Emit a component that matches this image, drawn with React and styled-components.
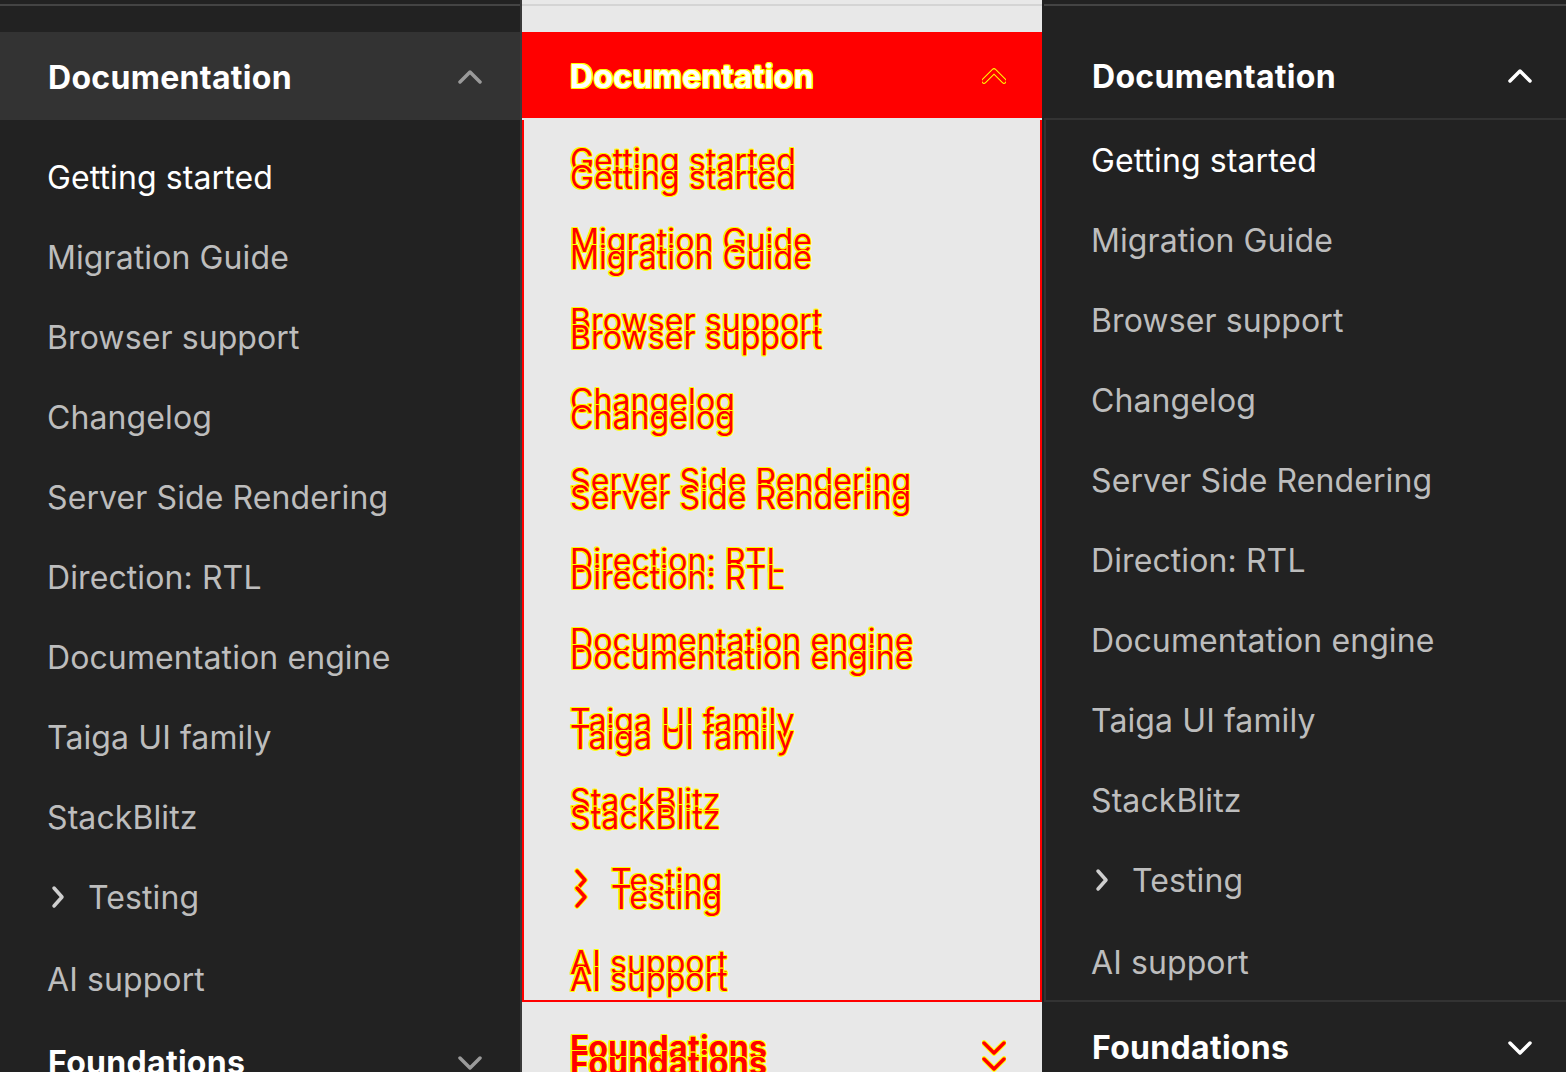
import React from 'react'
import styled, { createGlobalStyle, css } from 'styled-components'

const GlobalStyle = createGlobalStyle`
  html, body { margin: 0; padding: 0; background: #222222; }
  body { font-family: Inter, "Noto Sans", Arial, sans-serif; }
`

const pages = [
  'Getting started',
  'Migration Guide',
  'Browser support',
  'Changelog',
  'Server Side Rendering',
  'Direction: RTL',
  'Documentation engine',
  'Taiga UI family',
  'StackBlitz',
]

const outline = (c) => css`
  text-shadow: 1px 0 ${c}, -1px 0 ${c}, 0 1px ${c}, 0 -1px ${c},
    1px 1px ${c}, -1px -1px ${c}, 1px -1px ${c}, -1px 1px ${c};
`

const Page = styled.div`
  display: flex;
  height: 100vh;
  overflow: hidden;
`

const Column = styled.section`
  width: 522px;
  flex: none;
  box-sizing: border-box;
  display: flex;
  flex-direction: column;
  background: ${(p) => p.$bg};
  border-right: ${(p) => (p.$edge ? `2px solid ${p.$edge}` : 'none')};
`

const TopStrip = styled.div`
  flex: none;
  box-sizing: border-box;
  border-top: 2px solid ${(p) => p.$line};
  margin-top: 4px;
  height: 28px;
`

const Header = styled.div`
  flex: none;
  height: ${(p) => (p.$divider ? 86 : 88)}px;
  background: ${(p) => p.$bg || 'transparent'};
  border-bottom: ${(p) => (p.$divider ? `2px solid ${p.$divider}` : 'none')};
  display: grid;
`

const HeaderRow = styled.div`
  grid-area: 1 / 1;
  height: ${(p) => p.$h || 86}px;
  margin-top: ${(p) => p.$shift || 0}px;
  padding: 2px ${(p) => p.$pr || 38}px 0 48px;
  box-sizing: border-box;
  display: flex;
  align-items: center;
  justify-content: space-between;
  font-size: 32px;
  font-weight: 700;
  letter-spacing: 0.3px;
  white-space: nowrap;
  color: ${(p) => (p.$tone === 'diff' ? '#ff0000' : '#ffffff')};
  ${(p) => p.$tone && outline('#ffff00')}
`

const List = styled.div`
  flex: none;
  padding-top: ${(p) => p.$offset || 0}px;
  padding-bottom: ${(p) => (p.$framed ? 2 : 0)}px;
  box-shadow: ${(p) => (p.$framed ? `inset 2px 0 ${p.$framed}, inset 0 -2px ${p.$framed}` : 'none')};
`

const DiffBox = styled.div`
  flex: none;
  display: grid;
  border: 2px solid #ff0000;
  border-top: none;
`

const Layer = styled.div`
  grid-area: 1 / 1;
  padding-top: ${(p) => p.$offset}px;
  margin-bottom: ${(p) => -p.$offset}px;
`

const Row = styled.div`
  height: ${(p) => p.$h || 80}px;
  margin-top: ${(p) => p.$mt || 0}px;
  padding: 0 ${(p) => (p.$inset ? 46 : 47)}px;
  display: flex;
  align-items: center;
  gap: 22px;
  font-size: 32px;
  letter-spacing: 0.1px;
  white-space: nowrap;
  color: ${(p) => (p.$diff ? '#ff0000' : p.$active ? '#ffffff' : '#bdbdbd')};
  ${(p) => p.$diff && outline('#ffff00')}
`

const IconSlot = styled.span`
  display: flex;
  margin-left: 3px;
`

const Chevron = ({ dir, color, outlineColor }) => {
  const pts = {
    up: '2,17 12,7 22,17',
    down: '2,8 12,18 22,8',
    right: '4,3 12,12 4,21',
  }[dir]
  const narrow = dir === 'right'
  return (
    <svg width={narrow ? 16 : 24} height="24" viewBox={narrow ? '0 0 16 24' : '0 0 24 24'} fill="none">
      {outlineColor && (
        <polyline points={pts} stroke={outlineColor} strokeWidth="5.5" strokeLinecap="round" strokeLinejoin="round" />
      )}
      <polyline points={pts} stroke={color} strokeWidth="3.5" strokeLinecap="round" strokeLinejoin="round" />
    </svg>
  )
}

const NavRows = ({ diff, inset }) => (
  <>
    {pages.map((label, i) => (
      <Row key={label} $diff={diff} $inset={inset} $active={i === 0}>
        {label}
      </Row>
    ))}
    <Row $diff={diff} $inset={inset}>
      <IconSlot>
        <Chevron dir="right" color={diff ? '#ff0000' : '#cfcfcf'} outlineColor={diff ? '#ffff00' : null} />
      </IconSlot>
      Testing
    </Row>
    <Row $diff={diff} $inset={inset} $mt={4} $h={76}>
      AI support
    </Row>
  </>
)

const App = () => (
  <>
    <GlobalStyle />
    <Page>
      <Column $bg="#222222" $edge="#3a3a3a">
        <TopStrip $line="#444444" />
        <Header $bg="#333333">
          <HeaderRow $h={88}>
            Documentation
            <Chevron dir="up" color="#9a9a9a" />
          </HeaderRow>
        </Header>
        <List $offset={17}>
          <NavRows />
        </List>
        <Header>
          <HeaderRow $h={88}>
            Foundations
            <Chevron dir="down" color="#9a9a9a" />
          </HeaderRow>
        </Header>
      </Column>

      <Column $bg="#e8e8e8" $edge="#222222">
        <TopStrip $line="#d4d4d4" />
        <Header $bg="#ff0000" $divider="#e8e8e8">
          <HeaderRow $tone="light" $pr={36}>
            Documentation
            <Chevron dir="up" color="#ff0000" outlineColor="#ffff00" />
          </HeaderRow>
        </Header>
        <DiffBox>
          <Layer $offset={0}>
            <NavRows diff inset />
          </Layer>
          <Layer $offset={17}>
            <NavRows diff inset />
          </Layer>
        </DiffBox>
        <Header>
          <HeaderRow $h={88} $pr={36} $tone="diff">
            Foundations
            <Chevron dir="down" color="#ff0000" outlineColor="#ffff00" />
          </HeaderRow>
          <HeaderRow $h={88} $pr={36} $shift={16} $tone="diff">
            Foundations
            <Chevron dir="down" color="#ff0000" outlineColor="#ffff00" />
          </HeaderRow>
        </Header>
      </Column>

      <Column $bg="#222222">
        <TopStrip $line="#444444" />
        <Header $divider="#333333">
          <HeaderRow $pr={34}>
            Documentation
            <Chevron dir="up" color="#ffffff" />
          </HeaderRow>
        </Header>
        <List $framed="#333333">
          <NavRows />
        </List>
        <Header>
          <HeaderRow $h={88} $pr={34}>
            Foundations
            <Chevron dir="down" color="#ffffff" />
          </HeaderRow>
        </Header>
      </Column>
    </Page>
  </>
)

export default App
